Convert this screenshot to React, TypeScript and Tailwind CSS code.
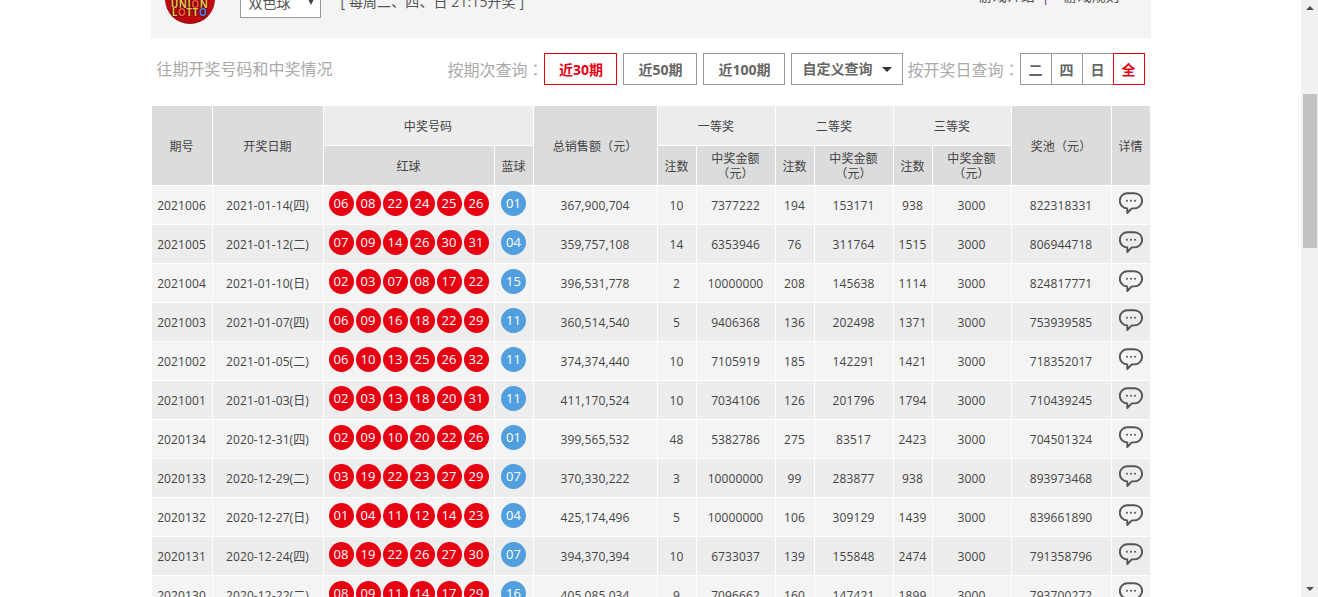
const FONT = '[font-family:"Open_Sans","Noto_Sans_CJK_SC",sans-serif]';
const PUNCT = '[font-family:"Noto_Sans_CJK_TC",sans-serif]';

type Row = {
  id: string;
  date: string;
  reds: string[];
  blue: string;
  sales: string;
  n1: number;
  m1: number;
  n2: number;
  m2: number;
  n3: number;
  pool: string;
};

const rows: Row[] = [
  { id: '2021006', date: '2021-01-14(四)', reds: ['06', '08', '22', '24', '25', '26'], blue: '01', sales: '367,900,704', n1: 10, m1: 7377222, n2: 194, m2: 153171, n3: 938, pool: '822318331' },
  { id: '2021005', date: '2021-01-12(二)', reds: ['07', '09', '14', '26', '30', '31'], blue: '04', sales: '359,757,108', n1: 14, m1: 6353946, n2: 76, m2: 311764, n3: 1515, pool: '806944718' },
  { id: '2021004', date: '2021-01-10(日)', reds: ['02', '03', '07', '08', '17', '22'], blue: '15', sales: '396,531,778', n1: 2, m1: 10000000, n2: 208, m2: 145638, n3: 1114, pool: '824817771' },
  { id: '2021003', date: '2021-01-07(四)', reds: ['06', '09', '16', '18', '22', '29'], blue: '11', sales: '360,514,540', n1: 5, m1: 9406368, n2: 136, m2: 202498, n3: 1371, pool: '753939585' },
  { id: '2021002', date: '2021-01-05(二)', reds: ['06', '10', '13', '25', '26', '32'], blue: '11', sales: '374,374,440', n1: 10, m1: 7105919, n2: 185, m2: 142291, n3: 1421, pool: '718352017' },
  { id: '2021001', date: '2021-01-03(日)', reds: ['02', '03', '13', '18', '20', '31'], blue: '11', sales: '411,170,524', n1: 10, m1: 7034106, n2: 126, m2: 201796, n3: 1794, pool: '710439245' },
  { id: '2020134', date: '2020-12-31(四)', reds: ['02', '09', '10', '20', '22', '26'], blue: '01', sales: '399,565,532', n1: 48, m1: 5382786, n2: 275, m2: 83517, n3: 2423, pool: '704501324' },
  { id: '2020133', date: '2020-12-29(二)', reds: ['03', '19', '22', '23', '27', '29'], blue: '07', sales: '370,330,222', n1: 3, m1: 10000000, n2: 99, m2: 283877, n3: 938, pool: '893973468' },
  { id: '2020132', date: '2020-12-27(日)', reds: ['01', '04', '11', '12', '14', '23'], blue: '04', sales: '425,174,496', n1: 5, m1: 10000000, n2: 106, m2: 309129, n3: 1439, pool: '839661890' },
  { id: '2020131', date: '2020-12-24(四)', reds: ['08', '19', '22', '26', '27', '30'], blue: '07', sales: '394,370,394', n1: 10, m1: 6733037, n2: 139, m2: 155848, n3: 2474, pool: '791358796' },
  { id: '2020130', date: '2020-12-22(二)', reds: ['08', '09', '11', '14', '17', '29'], blue: '16', sales: '405,085,034', n1: 9, m1: 7096662, n2: 160, m2: 147421, n3: 1899, pool: '793700272' },
];

const colWidths = [60, 110, 170, 38, 123, 38, 78, 38, 78, 38, 78, 99, 38];

function Ball({ n, blue }: { n: string; blue?: boolean }) {
  return (
    <span
      className={`flex h-[25px] w-[25px] items-center justify-center rounded-full text-[13px] leading-none text-white ${
        blue ? 'bg-[#529fe0]' : 'bg-[#e60012]'
      }`}
    >
      {n}
    </span>
  );
}

function ChatIcon() {
  return (
    <svg width="24" height="23" viewBox="0 0 24 23" fill="none" className="mx-auto -mt-[6px] block">
      <path
        d="M8.500 1.200h7a7.600 7.600 0 0 1 0 15.200h-2.700l-4.500 4.600v-4.600a7.600 7.600 0 0 1 .2-15.200z"
        stroke="#555555"
        strokeWidth="1.900"
        strokeLinejoin="round"
      />
      <circle cx="8" cy="8.800" r="1" fill="#555555" />
      <circle cx="12" cy="8.800" r="1" fill="#555555" />
      <circle cx="16" cy="8.800" r="1" fill="#555555" />
    </svg>
  );
}

function FilterButton({ label, active, width }: { label: string; active?: boolean; width: string }) {
  return (
    <button
      className={`h-8 border text-[14px] font-bold ${width} ${
        active ? 'border-[#e60012] text-[#e60012]' : 'border-[#999999] text-[#666666]'
      }`}
    >
      {label}
    </button>
  );
}

function DayButton({ label, active }: { label: string; active?: boolean }) {
  return (
    <button
      className={`-ml-px h-8 w-[32px] border text-[14px] font-bold ${
        active ? 'relative border-[#e60012] text-[#e60012]' : 'border-[#999999] text-[#666666]'
      }`}
    >
      {label}
    </button>
  );
}

function Yuan() {
  return (
    <>
      <span className={PUNCT}>（</span>元<span className={PUNCT}>）</span>
    </>
  );
}

const thDark = 'bg-[#dcdcdc] font-normal';
const thLight = 'bg-[#ededed] font-normal';

function PrizeAmountHead() {
  return (
    <th className={`${thDark} leading-[14px]`}>
      中奖金额
      <br />
      <Yuan />
    </th>
  );
}

export default function App() {
  return (
    <div className={`flex h-[597px] overflow-hidden bg-white ${FONT}`}>
      <main className="min-w-0 flex-1">
        <div className="mx-auto w-[1000px]">
          <header className="flex h-[38px] items-end overflow-hidden bg-[#f4f4f4] text-[#555555]">
            <div className="mb-[14px] ml-[14px] flex h-[50px] w-[50px] shrink-0 flex-col items-center justify-end rounded-full bg-[radial-gradient(circle_at_50%_40%,#a80810_0%,#c00a12_62%,#7c0206_100%)] pb-[8px] text-[10px] font-bold leading-[8px] tracking-[0.5px] text-[#ecc650] [text-shadow:0_0_2px_#000000]">
              <span>
                UNI<span className="text-[#ff5a3c]">O</span>N
              </span>
              <span>
                L<span className="text-[#ff5a3c]">O</span>TT<span className="text-[#4f86e8]">O</span>
              </span>
            </div>
            <div className="mb-[20px] ml-[25px] flex h-[32px] w-[81px] shrink-0 items-center justify-between border border-[#999999] bg-white pl-[8px] pr-[6px] text-[14px]">
              <span>双色球</span>
              <span className="h-0 w-0 border-x-[3px] border-t-[6px] border-x-transparent border-t-[#444444]" />
            </div>
            <div className="mb-[26px] ml-[20px] text-[14px] leading-5 tracking-[0.1px]">[ 每周二、四、日 21:15开奖 ]</div>
            <div className="mb-[32px] ml-auto mr-[31px] flex items-center text-[14px] leading-5">
              <span>游戏介绍</span>
              <span className="ml-[7px] mr-[14px] text-[#7a2a8a]">|</span>
              <span>游戏规则</span>
            </div>
          </header>

          <div className="flex h-[67px] items-start pl-[6px] pr-[6px] pt-[15px] text-[16px] leading-8 text-[#aaaaaa]">
            <span>往期开奖号码和中奖情况</span>
            <span className="ml-auto mr-px">
              按期次查询<span className={PUNCT}>：</span>
            </span>
            <div className="flex gap-[6px]">
              <FilterButton label="近30期" active width="w-[73px]" />
              <FilterButton label="近50期" width="w-[74px]" />
              <FilterButton label="近100期" width="w-[82px]" />
              <div className="flex h-8 w-[112px] items-center justify-between border border-[#999999] px-[10px] text-[14px] font-bold text-[#666666]">
                <span>自定义查询</span>
                <span className="h-0 w-0 border-x-[5px] border-t-[5px] border-x-transparent border-t-[#333333]" />
              </div>
            </div>
            <span className="ml-[4px]">
              按开奖日查询<span className={PUNCT}>：</span>
            </span>
            <div className="flex pl-px">
              <DayButton label="二" />
              <DayButton label="四" />
              <DayButton label="日" />
              <DayButton label="全" active />
            </div>
          </div>

          <table className="w-[1000px] table-fixed border-separate border-spacing-[1px] text-center text-[12px] tracking-[0.1px] text-[#444444] [&_td]:pt-[2px] [&_th]:pt-[2px]">
            <colgroup>
              {colWidths.map((w, i) => (
                <col key={i} style={{ width: w }} />
              ))}
            </colgroup>
            <thead>
              <tr className="h-[39px]">
                <th rowSpan={2} className={thDark}>期号</th>
                <th rowSpan={2} className={thDark}>开奖日期</th>
                <th colSpan={2} className={thLight}>中奖号码</th>
                <th rowSpan={2} className={thDark}>总销售额<Yuan /></th>
                <th colSpan={2} className={thLight}>一等奖</th>
                <th colSpan={2} className={thLight}>二等奖</th>
                <th colSpan={2} className={thLight}>三等奖</th>
                <th rowSpan={2} className={thDark}>奖池<Yuan /></th>
                <th rowSpan={2} className={thDark}>详情</th>
              </tr>
              <tr className="h-[39px]">
                <th className={thDark}>红球</th>
                <th className={thDark}>蓝球</th>
                <th className={thDark}>注数</th>
                <PrizeAmountHead />
                <th className={thDark}>注数</th>
                <PrizeAmountHead />
                <th className={thDark}>注数</th>
                <PrizeAmountHead />
              </tr>
            </thead>
            <tbody>
              {rows.map((r, i) => (
                <tr key={r.id} className={`h-[38px] ${i % 2 === 0 ? 'bg-[#f4f4f4]' : 'bg-[#ededed]'}`}>
                  <td>{r.id}</td>
                  <td>{r.date}</td>
                  <td>
                    <div className="-mt-[6px] flex justify-center gap-[2px]">
                      {r.reds.map((n, j) => (
                        <Ball key={j} n={n} />
                      ))}
                    </div>
                  </td>
                  <td>
                    <div className="-mt-[6px] flex justify-center">
                      <Ball n={r.blue} blue />
                    </div>
                  </td>
                  <td>{r.sales}</td>
                  <td>{r.n1}</td>
                  <td>{r.m1}</td>
                  <td>{r.n2}</td>
                  <td>{r.m2}</td>
                  <td>{r.n3}</td>
                  <td>3000</td>
                  <td>{r.pool}</td>
                  <td><ChatIcon /></td>
                </tr>
              ))}
            </tbody>
          </table>
        </div>
      </main>

      <aside className="flex h-full w-[17px] shrink-0 flex-col items-center bg-[#f1f1f1]">
        <span className="mt-[6px] h-0 w-0 border-x-[4px] border-b-[4px] border-x-transparent border-b-[#505050]" />
        <div className="mt-[84px] h-[154px] w-[14px] bg-[#c1c1c1]" />
        <span className="mt-auto mb-[6px] h-0 w-0 border-x-[4px] border-t-[4px] border-x-transparent border-t-[#505050]" />
      </aside>
    </div>
  );
}
